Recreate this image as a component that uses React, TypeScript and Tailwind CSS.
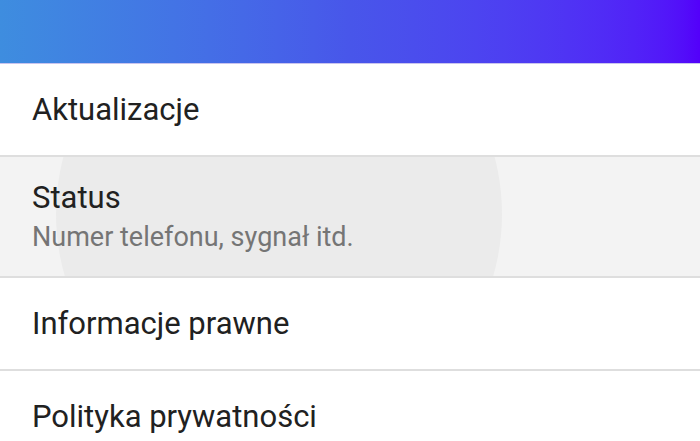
import React from "react";

interface Item {
    title: string;
    subtitle?: string;
    pressed?: boolean;
}

const items: Item[] = [
    { title: "Aktualizacje" },
    { title: "Status", subtitle: "Numer telefonu, sygnał itd.", pressed: true },
    { title: "Informacje prawne" },
    { title: "Polityka prywatności" },
];

function SettingsRow({ item }: { item: Item }) {
    const tall = !!item.subtitle;
    return (
        <div
            className={`relative overflow-hidden flex flex-col justify-center px-8 border-b-2 border-[#dedede] ${
                tall ? "h-[121px] bg-[#f3f3f3]" : "h-[93px] bg-white"
            }`}
        >
            {/* pressed ripple */}
            {item.pressed && (
                <div className="absolute left-[56px] top-[-166px] w-[446px] h-[446px] rounded-full bg-[#ebebeb]" />
            )}
            <div className="relative">
                <div className="text-[31px] leading-[38px] text-[#212121]">{item.title}</div>
                {item.subtitle && (
                    <div className="text-[27px] leading-[34px] text-[#757575] mt-[3px]">{item.subtitle}</div>
                )}
            </div>
        </div>
    );
}

export default function App() {
    return (
        <div className="w-[700px] h-[441px] overflow-hidden bg-white font-['Roboto',sans-serif]">
            <div className="h-[64px] bg-linear-to-r from-[#3e8ddf] via-[#4856ea] to-[#5300fa] border-b border-[#c9c4ee]" />
            {items.map((item) => (
                <SettingsRow key={item.title} item={item} />
            ))}
        </div>
    );
}
